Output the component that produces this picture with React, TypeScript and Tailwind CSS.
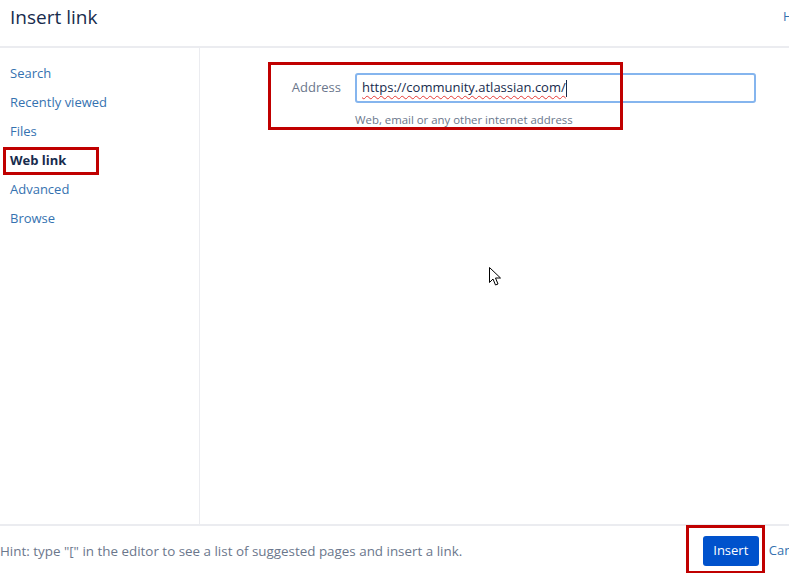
import React from 'react'

const font = { fontFamily: '"Open Sans", "Noto Sans", Arial, sans-serif' }

const navItems = ['Search', 'Recently viewed', 'Files', 'Web link', 'Advanced', 'Browse']

export default function App() {
  return (
    <div className="relative w-[789px] h-[573px] overflow-hidden bg-white text-[#172b4d]" style={font}>
      {/* header */}
      <div className="flex items-start justify-between h-[48px] border-b-2 border-[#ebecf0]">
        <h1 className="pl-[10px] pt-[3px] text-[19px] leading-[28px] font-normal text-[#172b4d]">Insert link</h1>
        <span className="pt-[7px] mr-[-22px] text-[13px] text-[#3572b0]">Help</span>
      </div>

      {/* body */}
      <div className="flex h-[476px]">
        <nav className="w-[200px] shrink-0 border-r border-[#ebecf0] pt-[11px]">
          {navItems.map((item) =>
            item === 'Web link' ? (
              <div key={item} className="h-[29px] flex items-center pl-[3px]">
                <span className="w-[96px] h-[28px] flex items-center pl-[4px] border-[3px] border-[#c00000] text-[13px] font-bold text-[#172b4d]">
                  {item}
                </span>
              </div>
            ) : (
              <div key={item} className="h-[29px] flex items-center pl-[10px] text-[13px] text-[#3572b0]">
                {item}
              </div>
            )
          )}
        </nav>

        <main className="flex-1 pt-[14px] pl-[68px]">
          <div className="relative flex">
            <div className="absolute left-0 top-0 w-[355px] h-[68px] border-[3px] border-[#c00000] pointer-events-none" />
            <div className="flex flex-col pt-[11px]">
              <div className="flex items-center">
                <label className="w-[73px] text-right text-[13px] text-[#6b778c]">Address</label>
                <div className="ml-[14px] w-[401px] h-[30px] flex items-center pl-[5px] border-2 border-[#85b5ee] rounded-[3px] text-[13px] text-[#172b4d]">
                  <span className="underline decoration-wavy decoration-[#e53935] decoration-1 underline-offset-[3px]">
                    https://community.atlassian.com/
                  </span>
                  <span className="w-px h-[17px] bg-[#172b4d]" />
                </div>
              </div>
              <p className="ml-[87px] mt-[8px] text-[11.4px] text-[#6b778c]">Web, email or any other internet address</p>
            </div>
          </div>
        </main>
      </div>

      {/* footer */}
      <div className="flex items-center justify-between h-[49px] border-t-2 border-[#ebecf0]">
        <p className="pt-[4px] text-[13.4px] text-[#6b778c]">Hint: type "[" in the editor to see a list of suggested pages and insert a link.</p>
        <div className="flex items-center mr-[-20px]">
          <div className="w-[79px] h-[49px] flex items-center justify-end pr-[3px] pt-[2px] border-[3px] border-[#c00000]">
            <button className="w-[56px] h-[30px] rounded-[3px] bg-[#0052cc] text-[13px] text-white">Insert</button>
          </div>
          <span className="ml-[4px] pt-[2px] text-[13px] text-[#3572b0]">Cancel</span>
        </div>
      </div>

      {/* mouse pointer */}
      <svg className="absolute left-[489px] top-[267px]" width="13" height="20" viewBox="0 0 13 20">
        <path d="M0.5 0.5 L0.5 15.5 L4 12 L6.5 18 L9 17 L6.5 11 L11.5 11 Z" fill="white" stroke="#000" strokeWidth="1" />
      </svg>
    </div>
  )
}
